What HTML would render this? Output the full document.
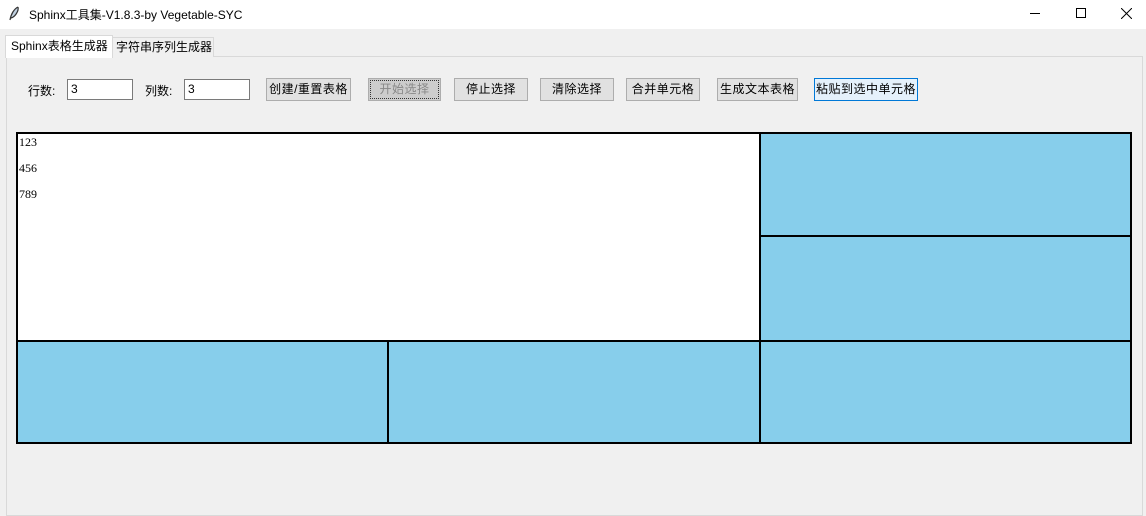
<!DOCTYPE html>
<html><head><meta charset="utf-8"><style>
*{margin:0;padding:0;box-sizing:border-box}
body{width:1146px;height:510px;background:#f0f0f0;position:relative;overflow:hidden;font-family:"Liberation Sans","Noto Sans CJK SC",sans-serif;font-size:12px;color:#000}
.a{position:absolute}
.btn{position:absolute;top:78px;height:23px;background:#e1e1e1;border:1px solid #adadad;text-align:center;line-height:21px;font-size:12px;letter-spacing:0.5px}
.inp{position:absolute;top:79px;height:21px;background:#fff;border:1px solid #7a7a7a;padding-left:3px;line-height:19px}
.l{position:absolute;background:#000}
.c{position:absolute;background:#87ceeb}
.t{position:absolute;left:19px;font-family:"Liberation Serif","Noto Serif CJK SC",serif;font-size:12px}
</style></head><body>
<div class="a" style="left:0;top:0;width:1146px;height:29px;background:#fff"></div>
<svg class="a" style="left:8px;top:6px" width="12" height="16" viewBox="0 0 12 16"><path d="M10 1C6 3 3 8 2 14M10 1C11 5 7 11 3 12" stroke="#333" fill="#bcd" stroke-width="1.2"/></svg>
<div class="a" style="left:29px;top:6px;font-size:12px">Sphinx工具集-V1.8.3-by Vegetable-SYC</div>
<div class="l" style="left:1030px;top:13px;width:10px;height:1px"></div>
<div class="a" style="left:1076px;top:8px;width:10px;height:10px;border:1px solid #000"></div>
<svg class="a" style="left:1121px;top:8px" width="11" height="11"><path d="M0 0L11 11M11 0L0 11" stroke="#000"/></svg>
<div class="a" style="left:6px;top:56px;width:1137px;height:460px;border:1px solid #d9d9d9;background:#f0f0f0"></div>
<div class="a" style="left:112px;top:37px;width:102px;height:20px;border:1px solid #d9d9d9;border-bottom:none;background:#f0f0f0;padding-left:3px;line-height:19px">字符串序列生成器</div>
<div class="a" style="left:5px;top:35px;width:108px;height:23px;border:1px solid #d9d9d9;border-bottom:none;background:#fff;padding-left:5px;line-height:20px">Sphinx表格生成器</div>
<div class="a" style="left:28px;top:82px">行数:</div>
<div class="inp" style="left:67px;width:66px">3</div>
<div class="a" style="left:145px;top:82px">列数:</div>
<div class="inp" style="left:184px;width:66px">3</div>
<div class="btn" style="left:266px;width:85px">创建/重置表格</div>
<div class="btn" style="left:368px;width:73px;background:#ccc;color:#888;outline:1px dotted #333;outline-offset:-3px">开始选择</div>
<div class="btn" style="left:454px;width:74px">停止选择</div>
<div class="btn" style="left:540px;width:74px">清除选择</div>
<div class="btn" style="left:626px;width:74px">合并单元格</div>
<div class="btn" style="left:717px;width:81px">生成文本表格</div>
<div class="btn" style="left:814px;width:104px;background:#e5f1fb;border-color:#0078d7">粘贴到选中单元格</div>
<div class="a" style="left:16px;top:132px;width:744px;height:209px;background:#fff"></div>
<div class="c" style="left:760px;top:132px;width:372px;height:312px"></div>
<div class="c" style="left:16px;top:341px;width:744px;height:103px"></div>
<div class="t" style="top:135px">123</div>
<div class="t" style="top:161px">456</div>
<div class="t" style="top:187px">789</div>
<div class="l" style="left:16px;top:132px;width:1116px;height:2px"></div>
<div class="l" style="left:16px;top:442px;width:1116px;height:2px"></div>
<div class="l" style="left:16px;top:132px;width:2px;height:312px"></div>
<div class="l" style="left:1130px;top:132px;width:2px;height:312px"></div>
<div class="l" style="left:759px;top:132px;width:2px;height:312px"></div>
<div class="l" style="left:387px;top:340px;width:2px;height:104px"></div>
<div class="l" style="left:16px;top:340px;width:1116px;height:2px"></div>
<div class="l" style="left:760px;top:235px;width:372px;height:2px"></div>
</body></html>
